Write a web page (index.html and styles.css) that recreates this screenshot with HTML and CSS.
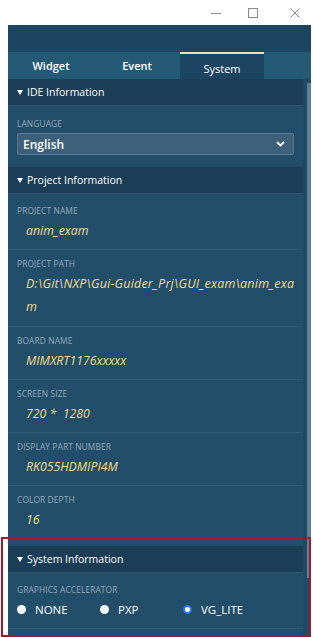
FILE: index.html
```html
<!DOCTYPE html>
<html>
<head>
<meta charset="utf-8">
<link rel="stylesheet" href="styles.css">
</head>
<body>
<div class="titlebar">
  <span class="wc wc-min"><svg width="10" height="10" viewBox="0 0 10 10"><path d="M0 5.5H10" stroke="#8a8a8a" stroke-width="1"/></svg></span>
  <span class="wc wc-max"><svg width="10" height="10" viewBox="0 0 10 10"><rect x="0.5" y="0.5" width="9" height="9" fill="none" stroke="#8a8a8a" stroke-width="1"/></svg></span>
  <span class="wc wc-close"><svg width="10" height="10" viewBox="0 0 10 10"><path d="M0.5 0.5L9.5 9.5M9.5 0.5L0.5 9.5" stroke="#8a8a8a" stroke-width="1"/></svg></span>
</div>
<div class="panel">
  <div class="topband"></div>
  <div class="tabs">
    <div class="tab">Widget</div>
    <div class="tab">Event</div>
    <div class="tab active">System</div>
    <div class="tab-rest"></div>
  </div>
  <div class="body">
    <div class="content">
      <div class="sec-head"><span class="tri"></span>IDE Information</div>
      <div class="ide">
        <div class="label">LANGUAGE</div>
        <div class="select"><span>English</span><svg width="9" height="6" viewBox="0 0 9 6"><path d="M1 1L4.5 4.5L8 1" fill="none" stroke="#ffffff" stroke-width="1.8"/></svg></div>
      </div>
      <div class="sec-head"><span class="tri"></span>Project Information</div>
      <div class="item first">
        <div class="label">PROJECT NAME</div>
        <div class="value">anim_exam</div>
      </div>
      <div class="item">
        <div class="label">PROJECT PATH</div>
        <div class="value path">D:\Git\NXP\Gui-Guider_Prj\GUI_exam\anim_exam</div>
      </div>
      <div class="item">
        <div class="label">BOARD NAME</div>
        <div class="value">MIMXRT1176xxxxx</div>
      </div>
      <div class="item">
        <div class="label">SCREEN SIZE</div>
        <div class="value">720 *&nbsp;&nbsp;1280</div>
      </div>
      <div class="item">
        <div class="label">DISPLAY PART NUMBER</div>
        <div class="value">RK055HDMIPI4M</div>
      </div>
      <div class="item last">
        <div class="label">COLOR DEPTH</div>
        <div class="value">16</div>
      </div>
      <div class="sec-head"><span class="tri"></span>System Information</div>
      <div class="item sys">
        <div class="label">GRAPHICS ACCELERATOR</div>
        <div class="radios">
          <label class="radio r-none"><span class="dot"></span>NONE</label>
          <label class="radio r-pxp"><span class="dot"></span>PXP</label>
          <label class="radio r-vg"><span class="dot on"></span>VG_LITE</label>
        </div>
      </div>
    </div>
    <div class="scroll"><div class="thumb"></div></div>
  </div>
</div>
<div class="highlight"></div>
</body>
</html>
```
FILE: styles.css
```css
* { box-sizing: border-box; }
html, body { margin: 0; padding: 0; background: #ffffff; }
body {
  width: 313px;
  height: 637px;
  overflow: hidden;
  font-family: "Open Sans", "Noto Sans", sans-serif;
  position: relative;
}
.titlebar {
  height: 25px;
  display: flex;
  justify-content: flex-end;
  align-items: center;
}
.wc { display: flex; width: 10px; height: 10px; }
.wc-min { margin-right: 27px; }
.wc-max { margin-right: 32px; }
.wc-close { margin-right: 13px; }
.panel {
  margin-left: 8px;
  width: 303px;
  height: 612px;
  display: flex;
  flex-direction: column;
  background: #234e69;
}
.topband { height: 27px; background: #1c4561; flex: none; }
.tabs {
  height: 27px;
  flex: none;
  display: flex;
  background: #245a75;
  font-size: 11px;
  font-weight: 600;
  color: #ffffff;
}
.tab {
  display: flex;
  align-items: center;
  justify-content: center;
}
.tab:nth-child(1) { width: 86px; }
.tab:nth-child(2) { width: 86px; }
.tab.active {
  width: 84px;
  background: #1c4561;
  border-top: 2px solid #e8e4b4;
  padding-top: 3px;
  font-weight: 400;
}
.tab-rest { flex: 1; }
.body { flex: 1; display: flex; min-height: 0; }
.content { flex: 1; min-width: 0; overflow: hidden; }
.scroll {
  width: 8px;
  background: #1f4a64;
  padding: 4px 0 0 4px;
}
.thumb { width: 4px; height: 495px; background: #5d7f97; }
.sec-head {
  height: 27px;
  background: #1b3d56;
  border-bottom: 1px solid #2e5a75;
  color: #ffffff;
  font-size: 10.5px;
  display: flex;
  align-items: center;
  padding-left: 9px;
}
.tri {
  width: 0; height: 0;
  border-left: 3.5px solid transparent;
  border-right: 3.5px solid transparent;
  border-top: 5px solid #ffffff;
  margin-right: 4px;
}
.ide { padding: 11px 9px 12px 9px; height: 61px; }
.label {
  font-size: 8.4px;
  line-height: 14px;
  color: #93abbc;
  letter-spacing: 0.1px;
}
.select {
  margin-top: 2px;
  height: 22px;
  width: 277px;
  background: #3e6179;
  border: 1px solid #587a92;
  border-radius: 2px;
  display: flex;
  align-items: center;
  justify-content: space-between;
  padding: 0 8px 0 5px;
  color: #ffffff;
  font-size: 12px;
  font-weight: 600;
}
.item {
  padding: 7px 9px 8px 9px;
  border-bottom: 1px solid #2f5b77;
}
.item.first { padding-top: 10px; }
.item.last { border-bottom: none; padding-bottom: 16px; }
.value {
  margin-top: 3px;
  padding-left: 9px;
  font-size: 12.3px;
  line-height: 20px;
  font-style: italic;
  color: #f2dd8c;
}
.value.path {
  word-break: break-all;
  margin-top: 1px;
  line-height: 23px;
  width: 282px;
  font-size: 12.5px;
  letter-spacing: 0.2px;
}
.item.sys { padding-top: 10px; padding-bottom: 10px; }
.radios {
  display: flex;
  align-items: center;
  margin-top: 3px;
  font-size: 11.5px;
  color: #ffffff;
  height: 18px;
}
.radio { display: flex; align-items: center; }
.dot {
  width: 9px; height: 9px;
  border-radius: 50%;
  background: #ffffff;
  margin-right: 9px;
}
.dot.on {
  background: #ffffff;
  border: 2px solid #1a7cf0;
}
.r-none { width: 83px; }
.r-pxp { width: 83px; }
.highlight {
  position: absolute;
  left: 1px;
  top: 537px;
  width: 310px;
  height: 100px;
  border: 2px solid #a3182b;
  pointer-events: none;
}
```
